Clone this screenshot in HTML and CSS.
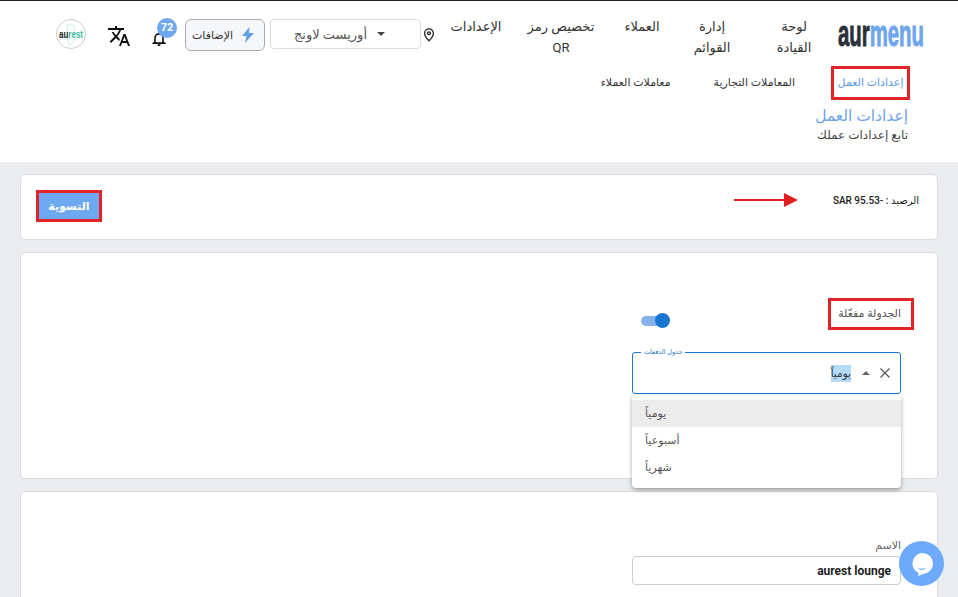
FILE: index.html
```html
<!DOCTYPE html>
<html lang="ar" dir="rtl">
<head>
<meta charset="utf-8">
<title>aurmenu</title>
<link rel="stylesheet" href="styles.css">
</head>
<body>
<header class="topbar">
  <div class="logo" dir="ltr"><span class="logo-text"><span class="logo-dark">aur</span><span class="logo-blue">menu</span></span></div>
  <nav class="mainnav">
    <a class="navitem">لوحة<br>القيادة</a>
    <a class="navitem">إدارة<br>القوائم</a>
    <a class="navitem">العملاء</a>
    <a class="navitem">تخصيص رمز<br>QR</a>
    <a class="navitem">الإعدادات</a>
  </nav>
  <div class="tools">
    <svg class="pin" width="14" height="16" viewBox="0 0 24 24" fill="none" stroke="#222" stroke-width="2.2"><path d="M12 22s7.5-7.2 7.5-13A7.5 7.5 0 0 0 4.500 9c0 5.800 7.500 13 7.500 13z"/><circle cx="12" cy="9" r="2.500"/></svg>
    <div class="branch"><i class="caret"></i><span>أوريست لاونج</span></div>
    <button class="addons"><svg width="14" height="16" viewBox="0 0 14 16"><path d="M8.500 0 1 9h4.500L4 16l9-10H8z" fill="#5f9fe8"/></svg><span>الإضافات</span></button>
    <div class="bell">
      <svg width="16" height="17" viewBox="0 0 24 24" fill="none" stroke="#111" stroke-width="2.400"><path d="M6 17V11a6 6 0 0 1 12 0v6l2 2H4zM10 22h4"/></svg>
      <span class="badge">72</span>
    </div>
    <svg class="lang" width="24" height="24" viewBox="0 0 24 24" fill="#111"><path d="m12.870 15.070-2.540-2.510.03-.03A17.520 17.520 0 0 0 14.070 6H17V4h-7V2H8v2H1v2h11.170C11.500 7.920 10.440 9.750 9 11.350 8.070 10.320 7.300 9.190 6.690 8h-2c.73 1.630 1.730 3.170 2.980 4.560l-5.090 5.020L4 19l5-5 3.110 3.110zM18.500 10h-2L12 22h2l1.120-3h4.750L21 22h2zm-2.620 7 1.620-4.330L19.120 17z"/></svg>
    <div class="avatar" dir="ltr">
      <svg class="avatar-shape" width="30" height="30" viewBox="0 0 30 30"><path d="M12 5l7 2-1 16-5 3-2-10z" fill="none" stroke="#cfeee6"/></svg>
      <span class="avatar-text"><span class="av-dark">au</span><span class="av-green">rest</span></span>
    </div>
  </div>
</header>

<section class="pagehead">
  <div class="tabs">
    <a class="tab tab-active">إعدادات العمل</a>
    <a class="tab">المعاملات التجارية</a>
    <a class="tab">معاملات العملاء</a>
  </div>
  <h1 class="title">إعدادات العمل</h1>
  <p class="subtitle">تابع إعدادات عملك</p>
</section>

<main class="content">
  <section class="card balance">
    <p class="balance-text">الرصيد : <bdi>SAR 95.53-</bdi></p>
    <svg class="arrow" width="64" height="16" viewBox="0 0 64 16"><path d="M0 7h50V1l14 7-14 7V9H0z" fill="#e02020"/></svg>
    <button class="settle">التسوية</button>
  </section>

  <section class="card schedule">
    <div class="mark-label">الجدولة مفعّلة</div>
    <div class="toggle-row"><span class="toggle"><i></i></span></div>
    <div class="select-wrap">
      <div class="field">
        <span class="legend">جدول الدفعات</span>
        <span class="clear"><svg width="10" height="10" viewBox="0 0 10 10" stroke="#555" stroke-width="1.200"><path d="M.5.5l9 9M9.500.5l-9 9"/></svg></span>
        <i class="caret-up"></i>
        <mark class="selected">يومياً</mark>
      </div>
      <ul class="menu">
        <li class="option option-hover">يومياً</li>
        <li class="option">أسبوعياً</li>
        <li class="option">شهرياً</li>
      </ul>
    </div>
  </section>

  <section class="card namecard">
    <label class="name-label">الاسم</label>
    <div class="name-input">aurest lounge</div>
  </section>
</main>

<button class="chat"><svg width="26" height="26" viewBox="0 0 26 26"><path d="M13 2a10.500 10.500 0 0 1 1 21l-5 2 .5-3A10.500 10.500 0 0 1 13 2z" fill="#fff"/><path d="M9 16.500q4 2.500 8 0-1 2.500-4 2.500t-4-2.500z" fill="#6eaafb"/></svg></button>
</body>
</html>
```
FILE: styles.css
```css
* { box-sizing: border-box; }
html, body { height: 100%; }
body {
  margin: 0;
  height: 597px;
  overflow: hidden;
  background: #ebecf0;
  font-family: Roboto, "Noto Sans", "DejaVu Sans", sans-serif;
  color: #222;
}
.topbar {
  display: flex;
  align-items: flex-start;
  height: 68px;
  background: #fff;
  border-top: 1px solid #222;
  border-bottom: 1px solid #eee;
  padding: 0 34px 0 0;
}
.logo { width: 86px; height: 22px; margin-top: 17px; flex: none; }
.logo-text {
  display: inline-block;
  transform: scaleX(.55);
  transform-origin: left center;
  font-family: "Liberation Sans Narrow", "Liberation Sans", sans-serif;
  font-weight: 700;
  font-size: 37px;
  line-height: 32px;
  white-space: nowrap;
  -webkit-text-stroke: 1px;
}
.logo-dark { color: #2b3138; }
.logo-blue { color: #6ea5ec; }
.mainnav {
  display: grid;
  grid-template-columns: 82px 82px 58px 104px 66px;
  margin-right: 3px;
  padding-top: 15px;
  flex: none;
}
.navitem { font-size: 13px; line-height: 21px; text-align: center; color: #333; }
.tools { display: flex; align-items: flex-start; flex: none; margin-right: 7px; }
.pin { margin-top: 26px; flex: none; }
.branch {
  display: flex; align-items: center; gap: 10px;
  width: 151px; height: 30px; margin: 18px 1px 0 0;
  padding: 0 35px 0 0;
  border: 1px solid #ddd; border-radius: 4px;
  font-size: 13px; color: #555;
}
.caret { width: 0; height: 0; border: 4px solid transparent; border-top-color: #444; border-bottom: 0; }
.addons {
  display: flex; align-items: center; gap: 8px;
  width: 80px; height: 32px; margin: 18px 5px 0 0; padding: 0 9px 0 0;
  border: 1px solid #aaa; border-radius: 6px; background: #f5f7fb;
  font: 11px Roboto, "Noto Sans", "DejaVu Sans", sans-serif; color: #333;
}
.bell { position: relative; width: 16px; height: 17px; margin: 29px 18px 0 0; }
.bell svg { display: block; }
.badge {
  position: absolute; top: -12px; left: 6px;
  width: 20px; height: 20px; border-radius: 50%;
  background: #6ea8f0; color: #fff; font-size: 11px; font-weight: 700; line-height: 20px; text-align: center;
}
.lang { margin: 23px 20px 0 0; flex: none; }
.avatar {
  position: relative; width: 30px; height: 30px; margin: 18px 21px 0 0;
  border: 1px solid #ccc; border-radius: 50%; background: #fff;
  display: flex; align-items: center; justify-content: center; overflow: hidden;
}
.avatar-shape { position: absolute; left: -1px; top: -1px; }
.avatar-text {
  position: relative; display: inline-block; transform: scaleX(.8);
  font: 700 10px "Liberation Sans Narrow", "Liberation Sans", sans-serif;
  white-space: nowrap;
}
.av-dark { color: #222; }
.av-green { color: #3fb59a; }

.pagehead { background: #fff; height: 96px; padding: 0 48px 0 0; }
.tabs { display: flex; gap: 37px; align-items: flex-start; margin-top: -2px; position: relative; }
.tab { font-size: 11px; line-height: 34px; color: #333; padding: 0 3px; white-space: nowrap; }
.tab-active { color: #5b9be6; border: 3px solid #e0242a; padding: 0 3px; height: 34px; width: 79px; line-height: 28px; text-align: center; margin-left: -4px; }
.title { margin: 5px 2px 0 0; font-size: 15.500px; line-height: 22px; font-weight: 500; color: #6ea5ec; }
.subtitle { margin: 0 2px 0 0; font-size: 12px; line-height: 17px; color: #444; }

.content { display: flex; flex-direction: column; gap: 12px; padding: 12px 20px 0; }
.card { background: #fff; border: 1px solid #ddd; border-radius: 5px; }
.balance { position: relative; display: flex; justify-content: space-between; height: 66px; padding: 15px 18px 0 15px; }
.balance-text { margin: 3px 0 0; font-size: 10px; line-height: 16px; font-weight: 500; color: #222; }
.arrow { position: absolute; left: 713px; top: 17px; }
.settle {
  width: 66px; height: 32px; padding: 0;
  background: #6ea8f0; border: 3px solid #e0242a;
  color: #fff; font: 700 11px Roboto, "Noto Sans", "DejaVu Sans", sans-serif;
}
.schedule { position: relative; height: 227px; padding: 45px 36px 0 0; }
.mark-label {
  width: 86px; height: 32px; margin-right: -13px;
  border: 3px solid #e0242a; padding: 0 10px 0 0;
  font-size: 11px; line-height: 25px; color: #555;
}
.toggle-row { width: 269px; height: 34px; margin-top: -22px; padding-top: 6px; }
.toggle { display: block; position: relative; width: 28px; height: 10px; margin: 2px auto 0 9px; background: #85b2ea; border-radius: 5px; }
.toggle i { position: absolute; left: 14px; top: -3px; width: 15px; height: 15px; border-radius: 50%; background: #1976d2; }
.select-wrap { position: relative; width: 269px; margin-top: 10px; }
.field {
  position: relative; display: flex; align-items: center; gap: 10px;
  height: 42px; padding: 0 10px 0 0;
  border: 1.500px solid #1976d2; border-radius: 3px;
}
.legend {
  position: absolute; left: 8px; top: -5px; padding: 0 3px;
  background: #fff; font-size: 6.500px; line-height: 9px; color: #1976d2;
}
.clear { display: block; line-height: 0; }
.caret-up { width: 0; height: 0; border: 4px solid transparent; border-bottom-color: #666; border-top: 0; }
.selected { background: #b4dcfa; color: #333; font-size: 10.500px; line-height: 17px; margin-right: 1px; }
.menu {
  position: absolute; top: 43px; left: 0; right: 0; z-index: 5;
  margin: 0; padding: 5px 0 0; list-style: none; height: 93px;
  background: #fff; border-radius: 0 0 4px 4px; box-shadow: 0 2px 4px rgba(0,0,0,.35);
}
.option { height: 27px; padding: 0 13px; text-align: left; font-size: 11px; line-height: 27px; color: #555; }
.option-hover { background: #ececec; }
.namecard { height: 130px; padding: 47px 36px 0 0; }
.name-label { display: block; font-size: 11px; line-height: 14px; color: #666; }
.name-input {
  width: 269px; height: 29px; margin-top: 3px; padding: 0 9px;
  border: 1px solid #ccc; border-radius: 4px;
  font-size: 12px; line-height: 29px; font-weight: 700; color: #222;
}
.chat {
  position: fixed; left: 899px; top: 541px; width: 45px; height: 45px; padding: 0;
  display: flex; align-items: center; justify-content: center;
  background: #6eaafb; border: 0; border-radius: 50%; z-index: 10;
}
```
